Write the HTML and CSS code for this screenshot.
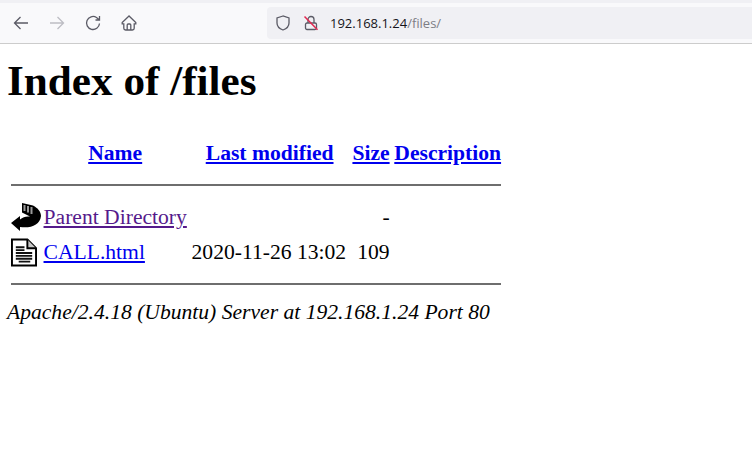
FILE: index.html
```html
<!DOCTYPE html>
<html lang="en">
<head>
    <meta charset="UTF-8">
    <meta name="viewport" content="width=device-width, initial-scale=1.0">
    <title>Index of /files</title>
    <link rel="stylesheet" href="styles.css">
</head>
<body>
    <header class="toolbar">
        <div class="tabstrip"></div>
        <div class="navbar">
            <div class="nav-buttons">
                <svg class="nav-icon" width="16" height="16" viewBox="0 0 16 16"><path d="M15 8H1.500M7.500 2 1.500 8l6 6"/></svg>
                <svg class="nav-icon off" width="16" height="16" viewBox="0 0 16 16"><path d="M1 8h13.500M8.500 2l6 6-6 6"/></svg>
                <svg class="nav-icon" width="16" height="16" viewBox="0 0 16 16"><path d="M14.500 8.500A6.500 6.500 0 1 1 11.500 2.500L14.500 5M14.500 1v4h-4"/></svg>
                <svg class="nav-icon" width="16" height="16" viewBox="0 0 16 16"><path d="M8 1 1.200 7.600v1.200h1.600v4.400c0 1 .7 1.800 1.800 1.800h6.800c1.100 0 1.800-.8 1.800-1.800V8.800h1.600V7.600L8 1zM6.200 14.800V10c0-.6.400-1 1-1h1.600c.6 0 1 .4 1 1v4.800"/></svg>
            </div>
            <div class="urlbar">
                <svg class="nav-icon" width="16" height="16" viewBox="0 0 16 16"><path d="M8 1 2 3v5c0 3.400 2.600 5.800 6 7 3.400-1.200 6-3.600 6-7V3L8 1z"/></svg>
                <svg class="lock" width="16" height="16" viewBox="0 0 16 16"><path class="lock-body" d="M5 8V4.500a3 3 0 0 1 6 0V8M4 8h8c.8 0 1.500.7 1.500 1.500v3.500c0 .8-.7 1.500-1.500 1.500H4c-.8 0-1.500-.7-1.500-1.500V9.500C2.500 8.700 3.200 8 4 8z"/><path class="lock-slash" d="M1.500 1.500 14.500 14.800"/></svg>
                <span class="url">192.168.1.24<span class="url-path">/files/</span></span>
            </div>
        </div>
    </header>

    <main class="listing">
        <h1>Index of /files</h1>
        <table>
            <tr>
                <th></th>
                <th><a href="#">Name</a></th>
                <th><a href="#">Last modified</a></th>
                <th><a href="#">Size</a></th>
                <th><a href="#">Description</a></th>
            </tr>
            <tr><th colspan="5"><hr></th></tr>
            <tr class="parent-row">
                <td>
                    <svg class="file-icon" width="30" height="29" viewBox="0 0 30 29"><path d="M0 20 9 13V16.500C12 14 15 13 19 13.500L11 9.500V0L22 2.500C27 5 30 9 30 13 29 22 20 25.500 9 24V28z" fill="#000"/><path d="M13.500 2v6M17 3v6.500M20.500 4v7" stroke="#9a9a9a" stroke-width="2" fill="none"/></svg>
                </td>
                <td><a class="visited" href="#">Parent Directory</a></td>
                <td></td>
                <td class="size">- </td>
                <td></td>
            </tr>
            <tr>
                <td>
                    <svg class="file-icon" width="26" height="29" viewBox="0 0 27 29"><path d="M1 1h16l9 9v18H1z" fill="#fff" stroke="#000" stroke-width="2"/><path d="M17 1v9h9" fill="#c8c8c8" stroke="#000" stroke-width="2"/><path d="M5 9h9M5 12h9M5 15h17M5 18h17M5 21h17M8 24h12" stroke="#111" stroke-width="2"/></svg>
                </td>
                <td><a href="#">CALL.html</a></td>
                <td class="modified">2020-11-26 13:02</td>
                <td class="size">109</td>
                <td></td>
            </tr>
            <tr><th colspan="5"><hr class="foot"></th></tr>
        </table>
        <address>Apache/2.4.18 (Ubuntu) Server at 192.168.1.24 Port 80</address>
    </main>
</body>
</html>
```

FILE: styles.css
```css
body {
    margin: 0;
    background: #fff;
    color: #000;
    font-family: "Liberation Serif", serif;
    font-size: 21.6px;
}

.toolbar {
    background: #f9f9fb;
    border-bottom: 1px solid #ccc;
    margin-right: 3px;
}

.tabstrip {
    height: 3px;
    background: #f0f0f4;
}

.navbar {
    display: flex;
    align-items: center;
    height: 36px;
    padding: 2px 0;
}

.nav-buttons {
    display: flex;
    gap: 20px;
    padding-left: 13px;
    width: 254px;
}

.nav-icon {
    fill: none;
    stroke: #5b5b66;
    stroke-width: 1.3;
}

.nav-icon.off {
    stroke: #bdbdc3;
}

.urlbar {
    flex: 1;
    display: flex;
    align-items: center;
    gap: 12px;
    height: 32px;
    padding-left: 8px;
    background: #f0f0f4;
    border-radius: 4px 0 0 4px;
}

.lock {
    fill: none;
    stroke-width: 1.3;
}

.lock-body {
    stroke: #5b5b66;
}

.lock-slash {
    stroke: #e22850;
    stroke-width: 1.5;
}

.url {
    margin-left: -1px;
    font-family: "Open Sans", "Noto Sans", sans-serif;
    font-size: 13px;
    color: #15141a;
}

.url-path {
    color: #7d7d85;
}

.listing {
    padding: 0 7px;
}

h1 {
    font-size: 43.2px;
    margin: 12px 0 33px;
}

table {
    margin-left: 1.5px;
    border-spacing: 2.7px;
}

th, td {
    padding: 1.35px;
}

.parent-row td {
    padding-bottom: 3.35px;
}

.file-icon {
    margin: 0 -2px 0 -1px;
    vertical-align: middle;
}

a {
    color: #00e;
}

a.visited {
    color: #551a8b;
}

.modified {
    padding-right: 3px;
    text-align: right;
}

.size {
    text-align: right;
}

hr {
    height: 2px;
    margin: 12.5px 0 12.5px -1px;
    border: 0;
    background: #6e6e6e;
}

hr.foot {
    margin-top: 10.5px;
}

address {
    margin-top: -0.5px;
}
```
